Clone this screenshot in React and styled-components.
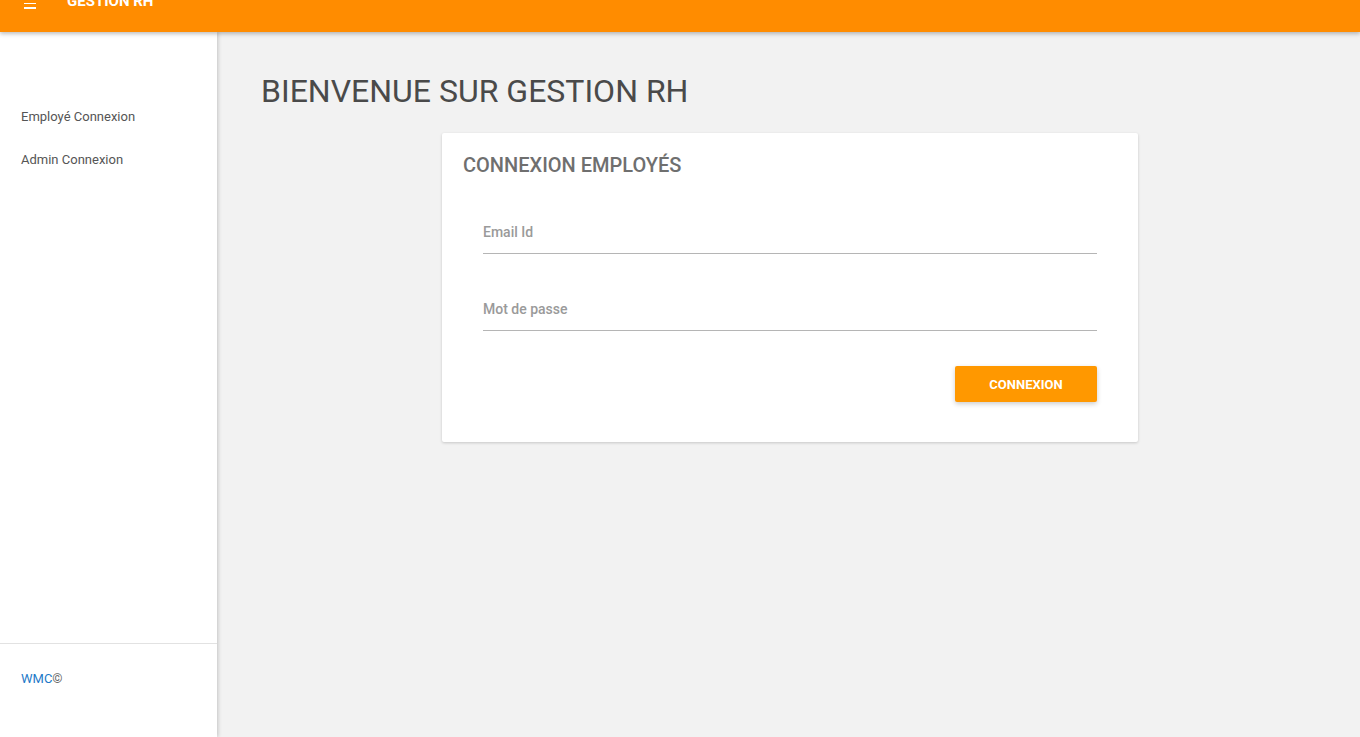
import styled, { createGlobalStyle } from 'styled-components';

const GlobalStyle = createGlobalStyle`
  html, body {
    margin: 0;
    padding: 0;
    height: 100%;
    overflow: hidden;
    font-family: Roboto, "Liberation Sans", sans-serif;
    background: #f2f2f2;
  }
`;

export default function App() {
  return (
    <>
      <GlobalStyle />
      <Page>
        <TopBar>
          <MenuIcon>
            <span />
            <span />
            <span />
          </MenuIcon>
          <BrandTitle>GESTION RH</BrandTitle>
        </TopBar>
        <Body>
          <Sidebar>
            <NavList>
              <NavItem>Employé Connexion</NavItem>
              <NavItem>Admin Connexion</NavItem>
            </NavList>
            <SideFooter>
              <Brand>WMC</Brand>
              <Copy>©</Copy>
            </SideFooter>
          </Sidebar>
          <Main>
            <PageTitle>BIENVENUE SUR GESTION RH</PageTitle>
            <Card>
              <CardTitle>CONNEXION EMPLOYÉS</CardTitle>
              <Form>
                <Field>
                  <Input placeholder="Email Id" />
                </Field>
                <Field>
                  <Input type="password" placeholder="Mot de passe" />
                </Field>
                <Actions>
                  <Button type="button">CONNEXION</Button>
                </Actions>
              </Form>
            </Card>
          </Main>
        </Body>
      </Page>
    </>
  );
}

// ---------------- layout ------------------------
const Page = styled.div`
  display: flex;
  flex-direction: column;
  height: 737px;
  width: 1360px;
`;

const TopBar = styled.header`
  position: relative;
  z-index: 2;
  display: flex;
  align-items: flex-start;
  height: 32px;
  background: #ff8c00;
  box-shadow: 0 2px 4px rgba(0, 0, 0, 0.25);
  overflow: hidden;
  flex-shrink: 0;
`;

const MenuIcon = styled.div`
  display: flex;
  flex-direction: column;
  gap: 3px;
  width: 12px;
  margin: -2px 0 0 24px;

  span {
    display: block;
    height: 1.5px;
    background: #fff;
  }
`;

const BrandTitle = styled.div`
  margin: -7px 0 0 31px;
  color: #fff;
  font-size: 15px;
  font-weight: 700;
  line-height: 17px;
`;

const Body = styled.div`
  display: flex;
  flex: 1;
  min-height: 0;
`;

const Sidebar = styled.aside`
  position: relative;
  z-index: 1;
  display: flex;
  flex-direction: column;
  width: 217px;
  flex-shrink: 0;
  background: #fff;
  box-shadow: 1px 0 4px rgba(0, 0, 0, 0.2);
`;

const NavList = styled.nav`
  display: flex;
  flex-direction: column;
  flex: 1;
  padding-top: 63px;
`;

const NavItem = styled.a`
  display: block;
  padding: 0 21px;
  height: 43px;
  line-height: 43px;
  font-size: 13px;
  color: #555;
  cursor: pointer;
`;

const SideFooter = styled.div`
  height: 94px;
  border-top: 1px solid #e2e2e2;
  padding: 27px 21px 0;
  box-sizing: border-box;
  font-size: 13px;
  line-height: 16px;
`;

const Brand = styled.span`
  color: #1e7ac8;
`;

const Copy = styled.span`
  color: #666;
`;

const Main = styled.main`
  flex: 1;
  display: flex;
  flex-direction: column;
  padding: 40px 0 0 44px;
`;

const PageTitle = styled.h1`
  margin: 0;
  font-size: 32px;
  font-weight: 400;
  line-height: 38px;
  color: #4a4a4a;
`;

const Card = styled.section`
  width: 696px;
  margin: 23px 0 0 181px;
  box-sizing: border-box;
  background: #fff;
  border-radius: 2px;
  box-shadow: 0 1px 3px rgba(0, 0, 0, 0.18);
  padding: 20px 41px 40px 21px;
`;

const CardTitle = styled.h2`
  margin: 0;
  font-size: 20px;
  font-weight: 500;
  line-height: 25px;
  color: #6f6f6f;
`;

const Form = styled.form`
  display: flex;
  flex-direction: column;
  padding: 34px 0 0 20px;
`;

const Field = styled.div`
  margin-bottom: 35px;
`;

const Input = styled.input`
  display: block;
  width: 100%;
  box-sizing: border-box;
  border: none;
  border-bottom: 1px solid #b5b5b5;
  padding: 10px 0 10px;
  font-family: inherit;
  font-size: 14px;
  line-height: 21px;
  color: #333;
  outline: none;
  background: transparent;

  &::placeholder {
    color: #9a9a9a;
    font-weight: 500;
  }
`;

const Actions = styled.div`
  display: flex;
  justify-content: flex-end;
`;

const Button = styled.button`
  width: 142px;
  height: 36px;
  border: none;
  border-radius: 2px;
  background: #ff9800;
  color: #fff;
  font-family: inherit;
  font-size: 13px;
  font-weight: 700;
  box-shadow: 0 2px 5px rgba(0, 0, 0, 0.2);
  cursor: pointer;
`;
